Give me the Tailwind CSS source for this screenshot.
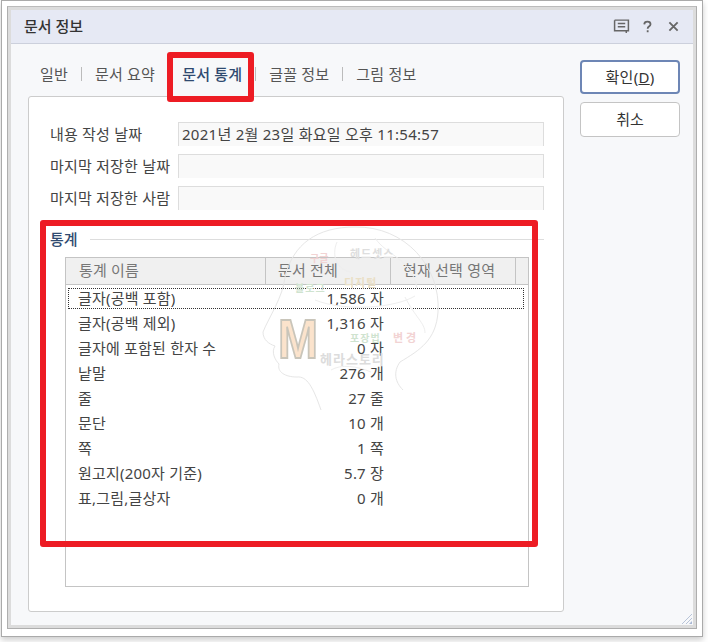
<!DOCTYPE html>
<html lang="ko">
<head>
<meta charset="UTF-8">
<title>문서 정보</title>
<script src="https://cdn.jsdelivr.net/npm/@tailwindcss/browser@4"></script>
</head>
<body class="bg-white w-[708px] h-[642px] overflow-hidden relative text-[15px] text-[#444] font-['Noto_Sans','Noto_Sans_CJK_KR',sans-serif]">
  <!-- screenshot frame -->
  <div class="absolute left-[1px] top-0 w-[702px] h-[637px] border border-[#aaa] bg-white shadow-[0_3px_6px_rgba(0,0,0,0.2)] p-[5px]">
    <div class="w-[690px] h-[623px] border border-[#aeaeae] border-t-[#bbb]">
      <div class="w-full h-full border-[3px] border-[#dcdcdc] bg-[#f7f8fa] flex flex-col relative">
        <!-- title bar -->
        <div class="h-[34px] shrink-0 bg-[#e6e9f4] border-b border-[#ccd0dc] flex items-center justify-between pl-[13px] pr-[14px]">
          <span class="text-[15px] text-[#333] font-medium">문서 정보</span>
          <div class="flex items-center text-[#555]">
            <svg width="17" height="17" viewBox="0 0 16 16" fill="none" stroke="#666" stroke-width="1.4"><path d="M1.5 2h13v10h-2v2.2M1.5 2v10h11"/><path d="M4.5 5.2h7M4.5 8.2h7"/></svg>
            <svg class="ml-[13px]" width="9" height="14" viewBox="0 0 11 15" fill="none" stroke="#666" stroke-width="2.2"><path d="M1.5 4.2C1.7 2 3.2 1 5.4 1c2.3 0 3.8 1.2 3.8 3 0 1.500-1 2.200-2 3-1 .7-1.500 1.300-1.500 2.700"/><path d="M5.700 11.500v2.400"/></svg>
            <svg class="ml-[16px]" width="11" height="11" viewBox="0 0 12 12" fill="none" stroke="#666" stroke-width="2"><path d="M1.500 1.500l9 9M10.500 1.500l-9 9"/></svg>
          </div>
        </div>
        <!-- dialog body -->
        <div class="flex-1 flex pl-[17px] pt-[8px]">
          <div class="w-[536px] flex flex-col">
            <!-- tabs -->
            <div class="h-[44px] flex items-start pt-[11px] pl-[12px] tracking-[0.2px] text-[#555] leading-[22px]">
              <span>일반</span>
              <span class="w-px h-[14px] bg-[#bbb] mx-[13px] mt-[4px]"></span>
              <span>문서 요약</span>
              <span class="w-[27px]"></span>
              <span class="font-medium text-[#2f4a70]">문서 통계</span>
              <span class="w-px h-[14px] bg-[#bbb] mx-[13px] mt-[4px]"></span>
              <span>글꼴 정보</span>
              <span class="w-px h-[14px] bg-[#bbb] mx-[13px] mt-[4px]"></span>
              <span>그림 정보</span>
            </div>
            <!-- tab pane -->
            <div class="h-[516px] bg-white border border-[#ccc] rounded-[3px] pt-[25px] pl-[21px] pr-[19px]">
              <div class="flex flex-col gap-[8px] tracking-[0.2px]">
                <div class="flex items-center h-[24px]">
                  <span class="w-[128px] shrink-0 text-[#444]">내용 작성 날짜</span>
                  <div class="flex-1 h-full bg-[#f9f9f9] border-l border-t border-r border-[#ddd] pl-[3px] text-[#444] leading-[22px] tracking-[0.27px]">2021년 2월 23일 화요일 오후 11:54:57</div>
                </div>
                <div class="flex items-center h-[24px]">
                  <span class="w-[128px] shrink-0 text-[#444]">마지막 저장한 날짜</span>
                  <div class="flex-1 h-full bg-[#f9f9f9] border-l border-t border-r border-[#ddd]"></div>
                </div>
                <div class="flex items-center h-[24px]">
                  <span class="w-[128px] shrink-0 text-[#444]">마지막 저장한 사람</span>
                  <div class="flex-1 h-full bg-[#f9f9f9] border-l border-t border-r border-[#ddd]"></div>
                </div>
              </div>
              <!-- 통계 group -->
              <div class="flex items-center h-[24px] mt-[17px]">
                <span class="font-medium text-[#2f4a70]">통계</span>
                <span class="flex-1 h-px bg-[#ddd] ml-[12px]"></span>
              </div>
              <div class="relative mt-[6px] ml-[15px] mr-[15px] h-[330px] border border-[#c4c4c4] text-[#444]">
                <!-- header -->
                <div class="h-[27px] flex bg-[#f0f0f0] border-b border-[#c4c4c4] text-[#777] tracking-[0.2px] leading-[25px]">
                  <div class="w-[200px] border-r border-[#c4c4c4] pl-[13px]">통계 이름</div>
                  <div class="w-[125px] border-r border-[#c4c4c4] pl-[12px]">문서 전체</div>
                  <div class="w-[125px] border-r border-[#c4c4c4] pl-[12px]">현재 선택 영역</div>
                </div>
                <!-- rows -->
                <div class="pt-px leading-[25px] tracking-[0.2px]">
                  <div class="flex h-[25px] pl-[12px] mr-[2px] outline-1 outline-dotted outline-[#333] -outline-offset-3"><span class="w-[236px]">글자(공백 포함)</span><span class="w-[70px] text-right whitespace-nowrap">1,586 자</span></div>
                  <div class="flex h-[25px] pl-[12px]"><span class="w-[236px]">글자(공백 제외)</span><span class="w-[70px] text-right whitespace-nowrap">1,316 자</span></div>
                  <div class="flex h-[25px] pl-[12px]"><span class="w-[236px]">글자에 포함된 한자 수</span><span class="w-[70px] text-right whitespace-nowrap">0 자</span></div>
                  <div class="flex h-[25px] pl-[12px]"><span class="w-[236px]">낱말</span><span class="w-[70px] text-right whitespace-nowrap">276 개</span></div>
                  <div class="flex h-[25px] pl-[12px]"><span class="w-[236px]">줄</span><span class="w-[70px] text-right whitespace-nowrap">27 줄</span></div>
                  <div class="flex h-[25px] pl-[12px]"><span class="w-[236px]">문단</span><span class="w-[70px] text-right whitespace-nowrap">10 개</span></div>
                  <div class="flex h-[25px] pl-[12px]"><span class="w-[236px]">쪽</span><span class="w-[70px] text-right whitespace-nowrap">1 쪽</span></div>
                  <div class="flex h-[25px] pl-[12px]"><span class="w-[236px]">원고지(200자 기준)</span><span class="w-[70px] text-right whitespace-nowrap">5.7 장</span></div>
                  <div class="flex h-[25px] pl-[12px]"><span class="w-[236px]">표,그림,글상자</span><span class="w-[70px] text-right whitespace-nowrap">0 개</span></div>
                </div>
              </div>
            </div>
          </div>
          <!-- buttons -->
          <div class="ml-[16px] pt-[8px] flex flex-col gap-[8px] w-[100px]">
            <button class="h-[34px] bg-white border-2 border-[#6d86b5] rounded-[4px] text-[#333] tracking-[0.3px]">확인(<span class="underline">D</span>)</button>
            <button class="h-[35px] bg-white border border-[#c4c4c4] rounded-[4px] text-[#333]">취소</button>
          </div>
        </div>
        <!-- resize grip -->
        <svg class="absolute right-0 bottom-0" width="12" height="12" viewBox="0 0 12 12" fill="none"><path d="M11 1L1 11M11 5l-6 6" stroke="#b8c4d8"/><path d="M11 8v3H8z" fill="#a9b8d4"/></svg>
      </div>
    </div>
  </div>
  <!-- watermark -->
  <svg class="absolute left-[255px] top-[222px] pointer-events-none" width="200" height="190" viewBox="0 0 200 190" fill="none">
    <path d="M8 110C14 95 28 75 30 55C38 22 62 5 100 5C150 4 186 45 183 90C181 118 165 128 145 140C138 150 140 160 148 168M8 110C8 118 14 122 20 124C16 130 20 138 24 142C22 150 30 155 42 155C52 154 58 165 66 188" stroke="#e6e6e6"/>
    <path d="M82 20c-6 14 0 28 14 30M120 16c12 18 36 20 42 50M150 75c10 20 20 26 20 36M60 78c30 12 80 8 100-4M116 150c-14-6-30-8-40-2" stroke="#eeeeee"/>
    <text x="55" y="40" font-size="10" fill="#f2d3d3" font-weight="700">구글</text>
    <text x="40" y="70" font-size="10" fill="#cfe3cf" font-weight="700" letter-spacing="1">블로그</text>
    <text x="95" y="36" font-size="11" fill="#dedede" font-weight="700" letter-spacing="1">헤드셋스</text>
    <text x="89" y="65" font-size="11" fill="#eadfc6" font-weight="700" letter-spacing="1">디지털</text>
    <text x="95" y="120" font-size="10" fill="#cfe3cf" font-weight="700" letter-spacing="1">포장법</text>
    <text x="138" y="120" font-size="11" fill="#f2d3d3" font-weight="700" letter-spacing="3">변경</text>
    <text x="65" y="142" font-size="13" fill="#dcdcdc" font-weight="700" letter-spacing="1">헤라스토리</text>
    <text x="23" y="136" font-size="56" fill="#fbe3cc" stroke="#c9c5ba" stroke-width="2" font-weight="700" font-family="Liberation Sans" textLength="40" lengthAdjust="spacingAndGlyphs">M</text>
  </svg>
  <!-- red annotation boxes -->
  <div class="absolute left-[167px] top-[52px] w-[87px] h-[50px] border-[6px] border-[#ed1c24] rounded-[3px]"></div>
  <div class="absolute left-[40px] top-[220px] w-[498px] h-[327px] border-[6px] border-[#ed1c24] rounded-[3px]"></div>
</body>
</html>
